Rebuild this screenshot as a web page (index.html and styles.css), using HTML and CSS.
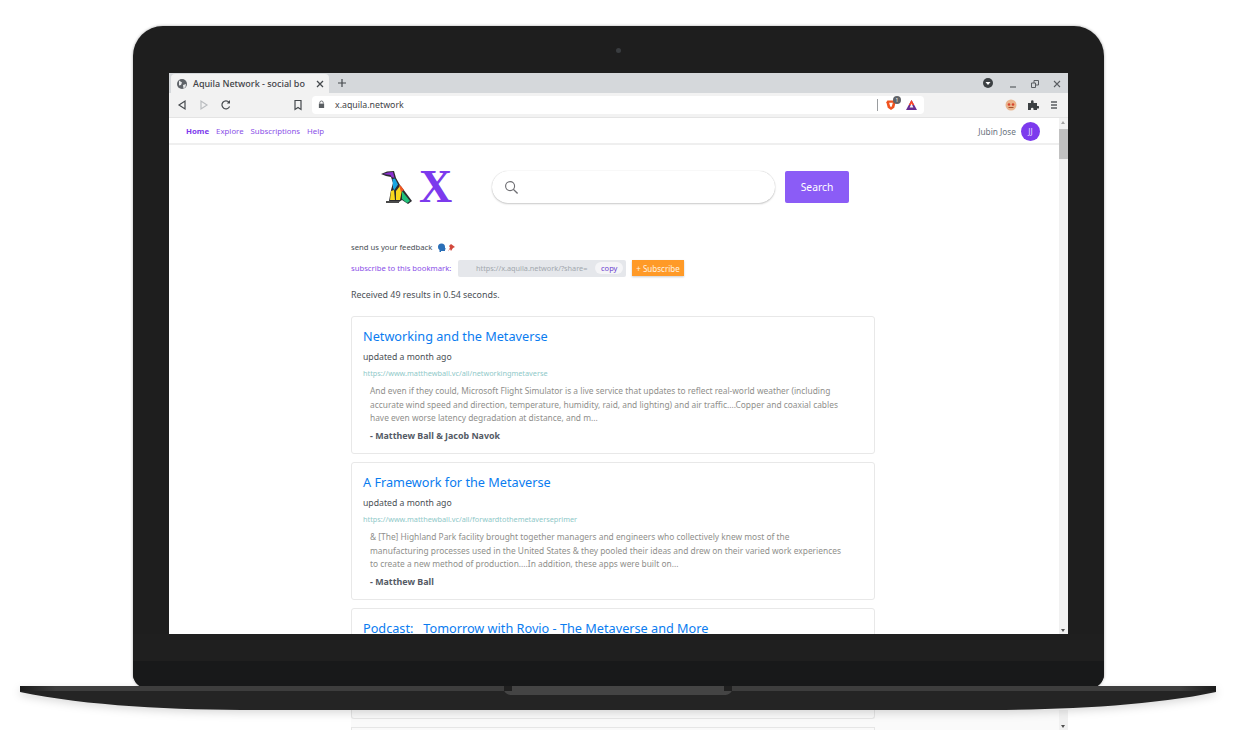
FILE: index.html
```html
<!DOCTYPE html>
<html lang="en">
<head>
<meta charset="utf-8">
<title>Aquila Network - social bookmarking</title>
<link rel="stylesheet" href="styles.css">
</head>
<body>
<div class="laptop">
  <span class="camera"></span>
  <div class="browser">
    <div class="tabstrip">
      <div class="tab">
        <svg class="ico14" viewBox="0 0 14 14"><circle cx="7" cy="7" r="5" fill="#5f6368"/><path d="M4 3.500l3 2-1 2.500-2 .5zM8 8l3-1-.5 3-2 1.500z" fill="#e9ebec"/></svg>
        <span class="tabtitle">Aquila Network - social bo</span>
        <svg class="ico10 tabclose" viewBox="0 0 10 10"><path d="M2 2l6 6M8 2l-6 6" stroke="#45494d" stroke-width="1.300"/></svg>
      </div>
      <svg class="newtab" viewBox="0 0 10 10"><path d="M5 1v8M1 5h8" stroke="#45494d" stroke-width="1.200"/></svg>
      <span class="grow"></span>
      <svg class="tabsearch" viewBox="0 0 12 12"><circle cx="6" cy="6" r="5" fill="#3c4043"/><path d="M3.500 5h5L6 8z" fill="#fff"/></svg>
      <div class="winctl">
        <svg class="ico10" viewBox="0 0 10 10"><path d="M2 8h6" stroke="#5a5e62" stroke-width="1.200"/></svg>
        <svg class="ico10" viewBox="0 0 10 10"><path d="M1.500 4h4v4.500h-4zM4 4V1.500h4.500V6H6" fill="none" stroke="#5a5e62"/></svg>
        <svg class="ico10" viewBox="0 0 10 10"><path d="M2 2l6 6M8 2l-6 6" stroke="#5a5e62" stroke-width="1.100"/></svg>
      </div>
    </div>
    <div class="toolbar">
      <div class="navbtns">
        <svg class="ico12" viewBox="0 0 12 12"><path d="M9 2v8L3 6z" fill="none" stroke="#45494d" stroke-width="1.200"/></svg>
        <svg class="ico12" viewBox="0 0 12 12"><path d="M3 2v8l6-4z" fill="none" stroke="#b9bcbf" stroke-width="1.200"/></svg>
        <svg class="ico12" viewBox="0 0 12 12"><path d="M9.600 7.500A4 4 0 1 1 9 3.300" fill="none" stroke="#45494d" stroke-width="1.200"/><path d="M10 1v3.500H6.800z" fill="#45494d"/></svg>
      </div>
      <svg class="bookmark" viewBox="0 0 10 12"><path d="M2 1.500h6v9L5 8.500l-3 2z" fill="none" stroke="#45494d" stroke-width="1.200"/></svg>
      <div class="omnibox">
        <svg class="lock" viewBox="0 0 8 10"><path d="M2 4V3a2 2 0 0 1 4 0v1" fill="none" stroke="#5a5e62"/><rect x="1" y="4" width="6" height="5" fill="#5a5e62"/></svg>
        <span class="url">x.aquila.network</span>
        <span class="grow"></span>
        <span class="omnisep"></span>
        <span class="brave">
          <svg class="ico12" viewBox="0 0 12 13"><path d="M2 1.500h8l1 2-1.500 6L6 12 2.500 9.500 1 3.500z" fill="#f0531f"/><path d="M4 4h4L7 7.500 6 9 5 7.500z" fill="#fff"/></svg>
          <span class="bravecount">1</span>
        </span>
        <svg class="bat" viewBox="0 0 13 12"><path d="M6.500 1L12 11H1z" fill="#662d91"/><path d="M6.500 1L9.200 6H3.800z" fill="#ff4724"/><path d="M6.500 4.500L8.400 8.500H4.600z" fill="#f4f4f4"/></svg>
      </div>
      <div class="exts">
        <svg class="ico12" viewBox="0 0 12 12"><circle cx="6" cy="6" r="5.500" fill="#e9b48d"/><circle cx="4" cy="5.500" r="1.300" fill="#d8452e"/><circle cx="8" cy="5.500" r="1.300" fill="#d8452e"/><path d="M3.500 8.500h5" stroke="#a3502c"/></svg>
        <svg class="ico12" viewBox="0 0 12 12"><path d="M1 4h3V2.500a1.300 1.300 0 0 1 2.600 0V4H10v3h1a1.300 1.300 0 0 1 0 2.600h-1V11H6.500V10a1.300 1.300 0 0 0-2.600 0v1H1z" fill="#3c4043"/></svg>
        <svg class="ico12" viewBox="0 0 12 12"><path d="M3 3h6M3 6h6M3 9h6" stroke="#5a5e62" stroke-width="1.300"/></svg>
      </div>
    </div>
    <div class="viewport">
      <div class="page">
        <nav class="topnav">
          <a class="navlink active">Home</a>
          <a class="navlink">Explore</a>
          <a class="navlink">Subscriptions</a>
          <a class="navlink">Help</a>
          <span class="grow"></span>
          <span class="username">Jubin Jose</span>
          <span class="avatar">JJ</span>
        </nav>
        <div class="searchrow">
          <svg class="bird" viewBox="0 0 32 34">
            <path d="M0 4 6 1.500 13 1l2 7 4 7 12 16-4 3-6-4-3 2H5v-1h3l2-11 2-7-2-6-5-1z" fill="#2c2c30"/>
            <path d="M2 4l5-1.500 5-.5 1.500 6-3-1-1-2z" fill="#8a2fd0"/>
            <path d="M11.500 9l2.500-.5 3 6-4 6-1-3z" fill="#16a5e0"/>
            <path d="M10 21l3-1 1 10H9z" fill="#f9d71c"/>
            <path d="M15 21l4-5 2 4-2 10h-4z" fill="#f9d71c"/>
            <path d="M18 15l2 1 3 4-3 2z" fill="#ee5522"/>
            <path d="M21 21l8 10-3 2-5-4z" fill="#22c27a"/>
            <path d="M5 31h13v2H5z" fill="#4a4a4a"/>
          </svg>
          <span class="logox">X</span>
          <div class="searchbox">
            <svg class="mag" viewBox="0 0 16 16"><circle cx="6.500" cy="6.500" r="4.800" fill="none" stroke="#6d6d72" stroke-width="1.200"/><path d="M10 10l4.500 4.500" stroke="#6d6d72" stroke-width="1.500"/></svg>
          </div>
          <button class="searchbtn">Search</button>
        </div>
        <div class="results">
          <div class="feedback">
            <span>send us your feedback</span>
            <svg class="fbicon" viewBox="0 0 9 9"><path d="M1 4a3.500 3.500 0 0 1 7 0v1l1 1-1 .5V8H4v1H2.500V7A3.500 3.500 0 0 1 1 4z" fill="#2a6fb8"/></svg>
            <svg class="fbicon" viewBox="0 0 9 9"><path d="M4 1l4 3-2 1-2 3-1-2-2 2.500L3 4.500 2 3z" fill="#d2483c"/></svg>
          </div>
          <div class="subrow">
            <span class="sublabel">subscribe to this bookmark:</span>
            <div class="sharebox">
              <span class="shareurl">https://x.aquila.network/?share=</span>
              <span class="copy">copy</span>
            </div>
            <button class="subbtn">+ Subscribe</button>
          </div>
          <p class="count">Received 49 results in 0.54 seconds.</p>
          <article class="card">
            <h2 class="ctitle">Networking and the Metaverse</h2>
            <p class="cdate">updated a month ago</p>
            <p class="curl">https://www.matthewball.vc/all/networkingmetaverse</p>
            <p class="cbody">And even if they could, Microsoft Flight Simulator is a live service that updates to reflect real-world weather (including<br>accurate wind speed and direction, temperature, humidity, raid, and lighting) and air traffic....Copper and coaxial cables<br>have even worse latency degradation at distance, and m...</p>
            <p class="cauthor">- Matthew Ball &amp; Jacob Navok</p>
          </article>
          <article class="card">
            <h2 class="ctitle">A Framework for the Metaverse</h2>
            <p class="cdate">updated a month ago</p>
            <p class="curl">https://www.matthewball.vc/all/forwardtothemetaverseprimer</p>
            <p class="cbody">&amp; [The] Highland Park facility brought together managers and engineers who collectively knew most of the<br>manufacturing processes used in the United States &amp; they pooled their ideas and drew on their varied work experiences<br>to create a new method of production....In addition, these apps were built on...</p>
            <p class="cauthor">- Matthew Ball</p>
          </article>
          <article class="card">
            <h2 class="ctitle">Podcast: &nbsp; Tomorrow with Rovio - The Metaverse and More</h2>
          </article>
        </div>
      </div>
      <div class="scrollbar">
        <span class="arrow up"></span>
        <span class="thumb"></span>
        <span class="grow"></span>
        <span class="arrow down"></span>
      </div>
    </div>
  </div>
  <div class="chin"></div>
</div>
<div class="base">
  <svg class="basesvg" viewBox="0 0 1196 24" preserveAspectRatio="none">
    <defs>
      <linearGradient id="edge" x1="0" x2="1" y1="0" y2="0">
        <stop offset="0" stop-color="#1a1a1a"/><stop offset=".03" stop-color="#3d3d3d"/><stop offset=".97" stop-color="#3d3d3d"/><stop offset="1" stop-color="#1a1a1a"/>
      </linearGradient>
    </defs>
    <path d="M0 0H1196V6C1130 20 1040 24 960 24H236C156 24 66 20 0 6Z" fill="#242424"/>
    <path d="M0 0H1196V5H0Z" fill="url(#edge)"/>
    <path d="M484 0H712V3C712 7 708 9 704 9H492C488 9 484 7 484 3Z" fill="#444"/>
    <path d="M484 0H492V5H484ZM704 0H712V5H704Z" fill="#202020"/>
  </svg>
</div>
<div class="spill">
  <div class="spillcol"><div class="spillcard"></div><div class="spillnext"></div></div>
  <div class="spillbar"><span class="arrow down"></span></div>
</div>
</body>
</html>
```
FILE: styles.css
```css
* { box-sizing: border-box; }
html, body { margin: 0; padding: 0; }
body {
  width: 1244px; height: 730px; overflow: hidden; background: #fff;
  font-family: "Noto Sans", "Liberation Sans", sans-serif; color: #4a4f55;
}
p, h2 { margin: 0; font-weight: 400; }
button { font-family: inherit; border: 0; }
svg { display: block; flex: none; }
.grow { flex: 1; }
.ico10 { width: 10px; height: 10px; }
.ico12 { width: 12px; height: 12px; }
.ico14 { width: 14px; height: 14px; }

.laptop {
  position: relative; width: 971px; height: 662px; margin: 26px 0 0 133px;
  padding: 47px 36px 0; display: flex; flex-direction: column;
  background: #1e1e1e; border-radius: 30px 30px 14px 14px;
  box-shadow: 0 0 3px rgba(0,0,0,.35);
}
.camera {
  position: absolute; top: 22px; left: 483px; width: 5px; height: 5px;
  border-radius: 50%; background: #3a3d40;
}
.chin { flex: 1; background: linear-gradient(#1f1f1f 0, #1f1f1f 27px, #18191a 27px); border-radius: 0 0 14px 14px; margin: 0 -36px; }

.browser { height: 561px; display: flex; flex-direction: column; background: #fff; overflow: hidden; }
.tabstrip { height: 20px; flex: none; display: flex; align-items: flex-end; background: #d5d8db; padding: 0 6px 0 2px; }
.tab { width: 158px; height: 19px; display: flex; align-items: center; gap: 4px; padding: 0 4px; background: #f2f2f2; border-radius: 4px 4px 0 0; }
.tabtitle { width: 118px; white-space: nowrap; font-size: 9px; font-weight: 500; color: #3f4347; }
.tabclose { margin-left: 2px; }
.newtab { width: 10px; height: 10px; margin: 0 0 5px 8px; }
.tabsearch { width: 12px; height: 12px; margin: 0 0 4px; }
.winctl { display: flex; gap: 12px; margin: 0 0 4px 14px; }
.toolbar { height: 25px; flex: none; display: flex; align-items: center; padding: 0 12px 1px 7px; background: #f2f2f2; border-bottom: 1px solid #e4e4e4; }
.navbtns { display: flex; gap: 10px; flex: none; }
.bookmark { width: 10px; height: 12px; margin-left: 61px; }
.omnibox { width: 612px; height: 18px; flex: none; margin-left: 9px; display: flex; align-items: center; padding: 0 6px; background: #fff; border-radius: 4px; }
.lock { width: 7px; height: 9px; }
.url { margin-left: 10px; font-size: 8.800px; color: #3f4347; }
.omnisep { width: 1px; height: 12px; background: #9a9da0; margin-right: 7px; }
.brave { position: relative; width: 18px; }
.bravecount { position: absolute; left: 8px; top: -3px; width: 8px; height: 8px; border-radius: 50%; background: #5f6368; color: #fff; font-size: 5px; line-height: 8px; text-align: center; }
.bat { width: 13px; height: 12px; margin-left: 2px; margin-right: 0; }
.exts { display: flex; gap: 10px; margin-left: 81px; flex: none; }
.exts svg:last-child { margin-left: -1px; }

.viewport { flex: 1; min-height: 0; display: flex; }
.page { flex: 1; min-width: 0; overflow: hidden; }
.topnav { height: 27px; display: flex; align-items: center; gap: 7px; padding: 1px 19px 0 17px; border-bottom: 2px solid #efefef; }
.navlink { font-size: 7.800px; color: #8a4fe8; }
.navlink.active { font-weight: 700; color: #7c3aed; }
.username { font-size: 8.300px; color: #6b7480; margin-right: -2px; }
.avatar { width: 19px; height: 19px; border-radius: 50%; background: #7c3aed; color: #e8dcff; font-size: 8px; line-height: 19px; text-align: center; }

.searchrow { display: flex; align-items: center; padding: 25px 0 0 212px; }
.bird { width: 32px; height: 34px; }
.logox { width: 35px; margin-left: 6px; font: 700 46px/34px "Liberation Serif", serif; color: #7c3aed; }
.searchbox { width: 283px; height: 32px; margin-left: 38px; padding-left: 12px; display: flex; align-items: center; border-radius: 16px; box-shadow: 0 1px 2px rgba(0,0,0,.2), 0 0 1px rgba(0,0,0,.2); }
.mag { width: 15px; height: 15px; }
.searchbtn { width: 64px; height: 32px; margin-left: 10px; background: #8b5cf6; color: #fff; font-size: 10.300px; border-radius: 2px; }

.results { width: 524px; margin: 36px 0 0 182px; }
.feedback { display: flex; align-items: center; gap: 5px; height: 14px; font-size: 7.700px; color: #4a4f55; }
.feedback .fbicon { width: 9px; height: 9px; }
.feedback .fbicon:last-child { margin-left: -4px; }
.subrow { display: flex; align-items: center; margin-top: 5px; height: 18px; }
.sublabel { width: 107px; font-size: 7.700px; color: #8a4fe8; white-space: nowrap; }
.sharebox { width: 168px; height: 17px; display: flex; align-items: center; padding-left: 18px; background: #e5e7eb; border-radius: 2px; }
.shareurl { width: 119px; white-space: nowrap; font-size: 7.300px; color: #a2a7ae; }
.copy { height: 12px; padding: 0 6px; background: #f5f5f7; border-radius: 6px; font-size: 7.500px; line-height: 12px; color: #6d3fd0; }
.subbtn { width: 52px; height: 16px; margin-left: 6px; padding: 0; background: #ff9a27; color: #fff3e0; font-size: 8px; box-shadow: 0 1px 2px rgba(0,0,0,.2); }
.count { margin-top: 11px; font-size: 8.900px; line-height: 14px; color: #4a4f55; }
.card { height: 138px; margin-top: 8px; padding: 10px 11px; border: 1px solid #e8e8e8; border-radius: 3px; }
.count + .card { margin-top: 14px; }
.ctitle { font-size: 12.700px; line-height: 18px; color: #0a7cf0; white-space: nowrap; }
.cdate { margin-top: 6px; font-size: 8.700px; line-height: 13px; color: #4a4f55; }
.curl { margin-top: 4px; font-size: 7.300px; line-height: 11px; color: #8fc9c9; white-space: nowrap; }
.cbody { margin: 5px 0 0 7px; font-size: 8.400px; line-height: 13.500px; color: #8f8f8c; white-space: nowrap; }
.cauthor { margin: 4px 0 0 7px; font-size: 8.900px; line-height: 13px; font-weight: 700; color: #555b66; }

.scrollbar { width: 9px; display: flex; flex-direction: column; background: #f1f1f1; }
.thumb { height: 30px; margin-top: 2px; background: #c1c1c1; }
.arrow { height: 9px; flex: none; position: relative; }
.arrow::after { content: ""; position: absolute; left: 2px; border-left: 2.500px solid transparent; border-right: 2.500px solid transparent; }
.arrow.up::after { top: 3px; border-bottom: 3px solid #a3a3a3; }
.arrow.down::after { bottom: 2px; border-top: 3px solid #505050; }

.base { position: relative; z-index: 2; width: 1196px; height: 24px; margin: -2px 0 0 20px; filter: drop-shadow(0 3px 4px rgba(0,0,0,.15)); }
.basesvg { width: 100%; height: 100%; }
.spill { display: flex; height: 20px; margin-left: 351px; background: #fafafa; width: 717px; }
.spillcol { width: 524px; }
.spillcard { height: 9px; border: 1px solid #e6e6e6; border-top: 0; border-radius: 0 0 3px 3px; }
.spillnext { height: 3px; margin-top: 8px; border: 1px solid #e6e6e6; border-bottom: 0; }
.spillbar { margin-left: 184px; width: 9px; height: 20px; background: #f1f1f1; display: flex; flex-direction: column; justify-content: flex-end; }
```
